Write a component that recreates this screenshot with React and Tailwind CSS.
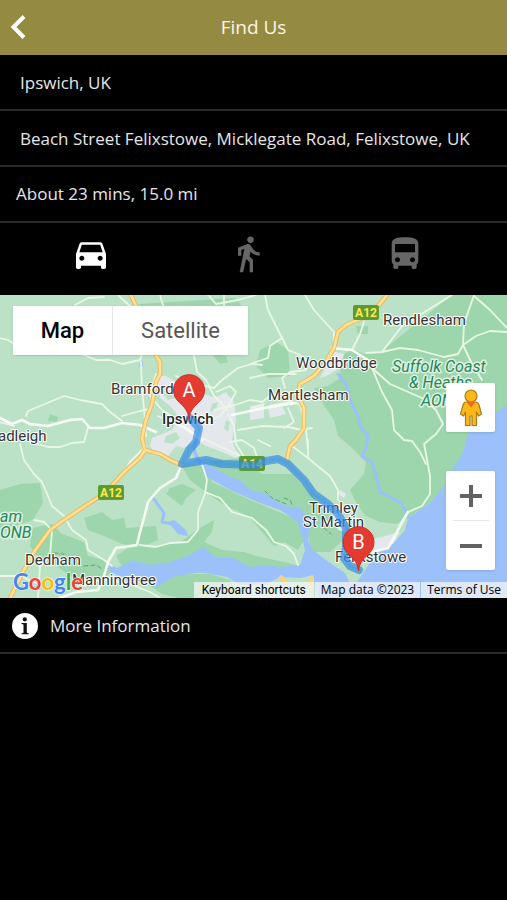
import { useState } from 'react'
import { MdDirectionsCar, MdDirectionsWalk, MdDirectionsBus } from 'react-icons/md'

const travelModes = [
  { id: 'driving', label: 'Driving', Icon: MdDirectionsCar },
  { id: 'walking', label: 'Walking', Icon: MdDirectionsWalk },
  { id: 'transit', label: 'Public transport', Icon: MdDirectionsBus }
]

const woods = [
  // Suffolk coast
  'M452 295L382 351L364 354L352 349L341 356L340 378L328 386L314 388L322 402L334 420L338 436L352 448L366 462L364 474L350 490L358 506L366 516L380 522L396 524L408 518L520 440V295Z',
  'M260 350L276 342L288 350L290 376L268 378L256 366Z',
  'M0 490L20 484L40 483L43 503L33 520L16 526L0 533Z',
  // Orwell banks
  'M203 462L240 458L262 474L292 474L306 488L316 500L330 508L346 520L350 534L330 552L312 552L304 520L250 492Z',
  'M180 462L204 466L212 482L250 500L298 520L304 540L298 550L284 542L274 546L262 532L248 516L226 506L208 494L190 480L184 470Z',
  'M170 488L182 484L196 490L186 498L182 506L174 500L166 494Z',
  // Stour
  'M116 556L128 548L160 546L180 542L200 528L214 520L212 532L204 542L222 550L244 552L256 556L284 562L300 566L240 572L160 574L124 570Z',
  'M84 518L102 512L112 520L124 518L126 528L156 526L158 540L140 548L122 544L104 536L88 530Z',
  'M32 528L52 524L62 534L84 542L88 556L104 560L112 572L100 580L70 576L54 564L40 560L30 546Z',
  'M150 586L172 574L210 574L230 580L240 598H178L162 594Z',
  'M212 354L226 356L228 362L220 364Z',
  'M50 414L58 417L57 422L48 421Z',
  'M356 326L368 326L368 334L358 334Z',
  'M138 304L236 298L244 310L150 312Z'
]

const towns = [
  'M156 376L166 376L176 382L204 394L216 398L232 400L234 420L230 446L240 454L236 458L222 452L206 446L196 440L184 448L176 446L168 456L156 456L150 446L152 438L162 434L172 430L180 418L170 406L160 398Z',
  'M214 398L226 392L234 402L236 420L232 440L238 456L226 452L212 444L206 430L206 408Z',
  'M250 406L264 404L264 418L250 420ZM268 408L282 406L286 414L270 418Z',
  'M320 378L334 352L344 354L340 368L326 376Z',
  'M370 540L392 534L400 532L393 544L380 552L372 552Z',
  'M330 510L342 516L346 532L338 530Z',
  'M340 490L346 494L344 498L338 494Z'
]

// green gaps between the built-up areas
const greens = [
  'M166 436L176 432L180 438L172 444L164 442Z',
  'M236 392L244 398L240 402L234 400Z',
  'M212 404L218 402L216 410L210 412Z',
  'M226 420L230 422L228 432L224 428Z',
  'M158 388L168 390L176 398L168 400Z'
]

const minorRoads = [
  'M75 305L88 298L104 297',
  'M118 295L130 306M160 295L166 316M208 295L216 304L238 300L256 295M224 295V308',
  'M0 338L8 340L20 348M84 355L96 360L110 360L122 364L140 360L142 354',
  'M141 362L142 390L144 408L146 436',
  'M0 422L14 426M26 416L28 411L64 396L80 400L102 404L110 412L122 421',
  'M88 428L84 442L72 443L60 447L48 447L30 442',
  'M122 416L140 411L150 409',
  'M20 444L24 460L34 474L42 482L48 496L52 506L64 516L72 530L86 540L88 550L104 560L112 566',
  'M34 520L44 522L52 530L50 556L40 566L38 598',
  'M146 446L130 462L122 476',
  'M194 356L197 372L206 380L214 396L228 410',
  'M176 376L188 382L214 388L222 380L238 368L252 364L262 365',
  'M156 374L150 396L162 410L178 420L200 424',
  'M158 416L178 424L190 432L206 440L228 450L240 456',
  'M214 410L232 406L250 400L262 402L270 396L278 394',
  'M228 414L234 426L236 444L246 460M216 392L230 386L236 392L228 406L220 416L200 424',
  'M238 430L262 426L288 427L302 430L312 428M288 408L294 422L284 428',
  'M252 408L264 404M270 406L290 402L300 404',
  'M265 295L268 310L282 338L288 350L298 354L306 360M282 338L270 346L268 358L250 364',
  'M305 295L314 310L334 332L334 342',
  'M250 378L268 374L296 374M285 388L282 378L290 372L306 370',
  'M364 322L360 334L352 350',
  'M366 353L382 352L402 326L452 295',
  'M382 352L400 348L418 350L444 357L458 354L463 345L476 336L490 331L507 332',
  'M474 295L464 324L463 345L472 364L482 380',
  'M474 296L490 310L507 328',
  'M372 368L390 384L422 398L436 410L443 424L436 434L424 444L426 454L430 476L430 494L422 506L408 512',
  'M372 368L382 392L392 410L394 430L404 440L412 441L420 452L426 464',
  'M300 404L306 430L308 450',
  'M292 446L300 452L308 458L320 468L330 476L338 490L338 500',
  'M308 440L308 458',
  'M202 464L207 480L205 494L198 512L198 530L188 542L170 543L156 547L140 545',
  'M205 492L220 498L232 512L252 518L266 530L274 542L286 546L294 554L298 565',
  'M258 440L270 446M230 442L242 440L254 448L260 466',
  'M0 576L20 576L38 584M84 586L100 580L124 582L150 592L160 598'
]

const mainRoads = [
  'M0 418L12 424L22 420L30 424L48 426L70 420L82 419L90 428L104 428L122 423L140 425L156 432',
  'M181 466L176 478L160 488L148 502L144 518L140 532L137 545L116 548L108 562L104 576L98 590L76 592L60 598',
  'M332 348L352 350L368 360L372 368',
  'M168 420L186 428L202 440',
  'M232 415L264 408L296 403',
  'M372 552L388 548L396 534L402 522L408 512'
]

const trunkRoads = [
  'M131 295L136 306L146 330L154 352L160 362L160 374L156 382L152 404L146 420L142 438L145 450L140 458L124 472L104 494L88 504L64 520L50 530L34 552L24 570L10 598',
  'M387 295L380 304L362 318L346 325L338 332L334 348L326 362L314 376L300 384L298 396L304 408L304 428L296 440L290 446L287 460',
  'M145 450L160 454L172 461L182 465'
]

const rivers = [
  'M338 374L346 384L350 400L358 416L360 426L368 436L366 448L362 456L372 462L376 476L380 492L392 498L402 504L408 517',
  'M196 440L194 452L200 464',
  'M153 498L164 513L162 522L172 524L184 534'
]

const places = [
  { name: 'Rendlesham', x: 383, y: 325 },
  { name: 'Woodbridge', x: 296, y: 368 },
  { name: 'Martlesham', x: 268, y: 400 },
  { name: 'Bramford', x: 111, y: 394 },
  { name: 'adleigh', x: -2, y: 441 },
  { name: 'Dedham', x: 25, y: 565 },
  { name: 'Manningtree', x: 72, y: 585 },
  { name: 'Trimley', x: 309, y: 513 },
  { name: 'St Martin', x: 303, y: 527 },
  { name: 'Felixstowe', x: 335, y: 562 }
]

const parks = [
  { name: 'Suffolk Coast', x: 392, y: 372 },
  { name: '& Heaths', x: 409, y: 388 },
  { name: 'AONB', x: 421, y: 406 },
  { name: 'am', x: 0, y: 522 },
  { name: 'ONB', x: 0, y: 538 }
]

const route =
  'M190 418L199 428L196 442L189 450L182 464L206 460L222 464L256 465L266 461L278 459L288 464L304 480L314 494L328 504L338 514L346 528L346 548L344 558L350 566L359 570'

function RoadSign({ x, y, children }) {
  return (
    <g>
      <rect x={x} y={y} width="26" height="15" rx="2" fill="#5c9a32" />
      <text x={x + 13} y={y + 12} textAnchor="middle" fontSize="12" fontWeight="700" fill="#ffe94d">
        {children}
      </text>
    </g>
  )
}

function Pin({ x, y, children }) {
  return (
    <g transform={`translate(${x} ${y})`}>
      <path
        d="M0 0C-1 -9 -5 -12 -10 -17A15.5 15.5 0 1 1 10 -17C5 -12 1 -9 0 0Z"
        fill="#e53a30"
        stroke="#c9302a"
        strokeWidth="1"
      />
      <text x="0" y="-22" textAnchor="middle" fontSize="20" fill="#fff">{children}</text>
    </g>
  )
}

function MapCanvas() {
  return (
    <svg
      className="block h-full w-full font-['Roboto',sans-serif]"
      viewBox="0 295 507 303"
      preserveAspectRatio="xMidYMid slice"
      role="img"
      aria-label="Route from Ipswich to Felixstowe"
    >
      <rect y="295" width="507" height="303" fill="#bbe2c6" />
      {woods.map((d) => <path key={d} d={d} fill="#9dd6ac" />)}
      {towns.map((d) => <path key={d} d={d} fill="#e4e8ec" />)}
      {greens.map((d) => <path key={d} d={d} fill="#bbe2c6" />)}

      <path
        fill="#9cc0f9"
        d="M507 405L495 413L488 428L468 433L463 453L452 470L443 487L430 503L408 518L405 530L393 544L377 553L365 570L357 582L350 583L345 573L330 563L313 550L308 540L310 520L300 508L283 505L266 494L250 490L240 480L230 477L213 467L200 460L196 450L194 456L202 466L207 477L230 490L260 503L280 510L298 522L302 537L305 550L300 565L280 567L267 565L250 567L233 558L217 558L203 547L190 555L167 563L150 565L133 560L117 568L108 564L110 572L123 577L157 587L173 577L200 572L227 577L240 585L266 584L280 577L300 578L313 575L318 598H507Z"
      />
      <path d="M494 411L507 404" stroke="#9dd6ac" strokeWidth="2" />
      <path d="M168 522L174 520L186 530L188 536L178 534ZM139 364L143 361L143 366L140 368Z" fill="#9cc0f9" />
      <g fill="none" strokeLinejoin="round" strokeLinecap="round">
        {rivers.map((d) => <path key={d} d={d} stroke="#9cc0f9" strokeWidth="3" />)}
        {minorRoads.map((d) => <path key={d} d={d} stroke="#e9f7e4" strokeWidth="1.8" />)}
        {mainRoads.map((d) => <path key={d} d={d} stroke="#f7fcf4" strokeWidth="2.6" />)}
        {trunkRoads.map((d) => <path key={d} d={d} stroke="#eebb55" strokeWidth="4.6" />)}
        {trunkRoads.map((d) => <path key={d} d={d} stroke="#fde09a" strokeWidth="2.6" />)}
        <path d="M265 491L272 498L286 504M284 498L290 500L293 506M324 528L331 534M84 566L96 565L102 569M54 553L64 554" stroke="#56a877" strokeDasharray="4 3" />
        <path d="M281 577L286 582M308 584L312 578L311 590" stroke="#f6d186" strokeWidth="4" />
      </g>

      <RoadSign x={353} y={305}>A12</RoadSign>
      <RoadSign x={98} y={485}>A12</RoadSign>
      <RoadSign x={239} y={456}>A14</RoadSign>

      <g fontSize="15" fill="#333" stroke="#fff" strokeWidth="2" strokeLinejoin="round" paintOrder="stroke">
        {places.map((p) => <text key={p.name} x={p.x} y={p.y}>{p.name}</text>)}
        <text x="162" y="424" fontWeight="500" fill="#1f1f1f">Ipswich</text>
      </g>
      <g fontSize="16" fontStyle="italic" fill="#26865a" stroke="#dff3e3" strokeWidth="3" strokeLinejoin="round" paintOrder="stroke">
        {parks.map((p) => <text key={p.name} x={p.x} y={p.y}>{p.name}</text>)}
      </g>

      <g fill="none" strokeLinejoin="round" strokeLinecap="round">
        <path d={route} stroke="#2f86e0" strokeOpacity="0.65" strokeWidth="8" />
        <path d={route} stroke="#3f9bf2" strokeOpacity="0.4" strokeWidth="3" />
      </g>
      <Pin x={189} y={419}>A</Pin>
      <Pin x={358.5} y={571}>B</Pin>

      <g fontFamily="Lato, sans-serif" fontSize="22" fontWeight="700" stroke="#fff" strokeWidth="1" paintOrder="stroke">
        <text x="13" y="590">
          <tspan fill="#4285f4">G</tspan>
          <tspan fill="#ea4335">o</tspan>
          <tspan fill="#fbbc05">o</tspan>
          <tspan fill="#4285f4">g</tspan>
          <tspan fill="#34a853">l</tspan>
          <tspan fill="#ea4335">e</tspan>
        </text>
      </g>
    </svg>
  )
}

function Pegman() {
  return (
    <svg width="24" height="38" viewBox="0 0 24 38" aria-hidden="true">
      <g fill="#fbb917" stroke="#a97b21" strokeWidth="1.2" strokeLinejoin="round">
        <path d="M7 13H17Q19 13 20 16L22.500 25L19.500 27L17.500 23V36.500H13V27H11V36.500H6.500V23L4.500 27L1.500 25L4 16Q5 13 7 13Z" />
        <circle cx="12" cy="7" r="6" />
      </g>
      <path d="M7.500 13H16.500L12 18.500Z" fill="#ef6c1a" />
    </svg>
  )
}

function InfoIcon() {
  return (
    <svg width="26" height="26" viewBox="0 0 26 26" aria-hidden="true">
      <circle cx="13" cy="13" r="13" fill="#fff" />
      <circle cx="12.800" cy="6.300" r="2.100" fill="#111" />
      <path d="M9.500 10H14.800V19.500Q14.800 20.300 16.800 20.400V21.300H9.500V20.400Q11.500 20.300 11.500 19.500V11.800Q11.500 11 9.500 10.900Z" fill="#111" />
    </svg>
  )
}

export default function App() {
  const [origin, setOrigin] = useState('Ipswich, UK')
  const [destination, setDestination] = useState('Beach Street Felixstowe, Micklegate Road, Felixstowe, UK')
  const [mode, setMode] = useState('driving')
  const [mapType, setMapType] = useState('map')

  return (
    <div className="min-h-screen bg-black font-['Open_Sans','Noto_Sans',sans-serif] text-[17px] text-[#e6e6e6]">
      <header className="grid h-[55px] grid-cols-[48px_1fr_48px] items-center bg-[#958a42]">
        <button type="button" aria-label="Back" className="flex h-full items-center pl-[10px]">
          <svg width="18" height="26" viewBox="0 0 18 26" fill="none" stroke="#fff" strokeWidth="4" aria-hidden="true">
            <path d="M14 1.500L3.500 12L14 22.500" />
          </svg>
        </button>
        <h1 className="text-center text-[19px] text-[#fbf6e6]">Find Us</h1>
      </header>

      <main>
        <div className="h-14 border-b-2 border-[#2b2b2b] px-5">
          <input
            type="text"
            aria-label="From"
            value={origin}
            onChange={(e) => setOrigin(e.target.value)}
            className="h-full w-full bg-transparent outline-none"
          />
        </div>
        <div className="h-14 border-b-2 border-[#2b2b2b] px-5">
          <input
            type="text"
            aria-label="To"
            value={destination}
            onChange={(e) => setDestination(e.target.value)}
            className="h-full w-full bg-transparent outline-none"
          />
        </div>
        <p className="flex h-14 items-center border-b-2 border-[#2b2b2b] px-4">About 23 mins, 15.0 mi</p>

        <div className="grid grid-cols-3 pt-[11px] pr-6 pb-[21px] pl-3">
          {travelModes.map(({ id, label, Icon }) => (
            <button
              key={id}
              type="button"
              aria-label={label}
              aria-pressed={mode === id}
              onClick={() => setMode(id)}
              className={`flex justify-center ${mode === id ? 'text-white' : 'text-[#666]'}`}
            >
              <Icon size={40} />
            </button>
          ))}
        </div>

        <section className="relative h-[303px] overflow-hidden">
          <MapCanvas />

          <div className="absolute top-[11px] left-[13px] flex h-[49px] bg-white font-['Roboto',sans-serif] text-[22px] shadow">
            <button
              type="button"
              onClick={() => setMapType('map')}
              className={`w-[100px] border-r border-[#e6e6e6] ${mapType === 'map' ? 'font-medium text-black' : 'text-[#565656]'}`}
            >
              Map
            </button>
            <button
              type="button"
              onClick={() => setMapType('satellite')}
              className={`w-[135px] ${mapType === 'satellite' ? 'font-medium text-black' : 'text-[#565656]'}`}
            >
              Satellite
            </button>
          </div>

          <button
            type="button"
            aria-label="Street View"
            className="absolute top-[88px] right-3 flex h-[49px] w-[49px] items-center justify-center rounded-xs bg-white shadow"
          >
            <Pegman />
          </button>

          <div className="absolute top-[176px] right-3 flex w-[49px] flex-col items-center rounded-xs bg-white shadow">
            <button type="button" aria-label="Zoom in" className="flex h-[49px] w-full items-center justify-center">
              <svg width="22" height="22" viewBox="0 0 22 22" aria-hidden="true">
                <path d="M9 0H13V9H22V13H13V22H9V13H0V9H9Z" fill="#616161" />
              </svg>
            </button>
            <div className="h-px w-9 bg-[#e6e6e6]" />
            <button type="button" aria-label="Zoom out" className="flex h-[49px] w-full items-center justify-center">
              <svg width="22" height="22" viewBox="0 0 22 22" aria-hidden="true">
                <path d="M0 9H22V13H0Z" fill="#616161" />
              </svg>
            </button>
          </div>

          <div className="absolute right-0 bottom-0 flex h-4 gap-px font-['Open_Sans',sans-serif] text-[12px] leading-4 font-medium text-black">
            <button type="button" className="bg-[#f5f5f5]/75 px-2 font-['Roboto',sans-serif] font-normal">Keyboard shortcuts</button>
            <span className="bg-[#f5f5f5]/75 px-[6px]">Map data ©2023</span>
            <a href="#terms" className="bg-[#f5f5f5]/75 px-[6px]">Terms of Use</a>
          </div>
        </section>

        <a href="#more" className="flex h-14 items-center gap-3 border-b-2 border-[#2b2b2b] px-3 pt-[2px]">
          <InfoIcon />
          More Information
        </a>
      </main>
    </div>
  )
}
